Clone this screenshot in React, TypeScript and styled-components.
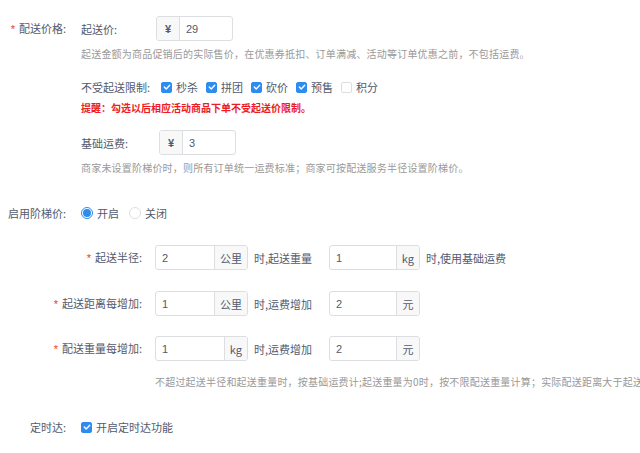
import React from "react";
import styled, { createGlobalStyle } from "styled-components";

const Global = createGlobalStyle`
  html, body { margin: 0; padding: 0; background: #fff; }
  body {
    font-family: "Noto Sans CJK SC", "Noto Sans", sans-serif;
    color: #515a6e;
    overflow: hidden;
    width: 640px;
    height: 453px;
  }
`;

const Page = styled.div`
  padding-top: 16px;
  width: 640px;
  box-sizing: border-box;
  white-space: nowrap;
  overflow: hidden;
`;

const FormItem = styled.div<{ $mt?: number }>`
  display: flex;
  align-items: flex-start;
  margin-top: ${(p) => p.$mt ?? 0}px;
`;

const Label = styled.div<{ $w: number; $h?: number }>`
  width: ${(p) => p.$w}px;
  flex: none;
  text-align: right;
  font-size: 11px;
  line-height: ${(p) => p.$h ?? 25}px;
  color: #515a6e;
`;

const Star = styled.span`
  color: #ed4014;
  font-size: 11px;
  margin-right: 4px;
  font-family: "Liberation Sans", sans-serif;
`;

const Content = styled.div<{ $ml: number }>`
  margin-left: ${(p) => p.$ml}px;
  display: flex;
  flex-direction: column;
`;

const InlineRow = styled.div<{ $mt?: number; $h?: number }>`
  display: flex;
  align-items: center;
  height: ${(p) => p.$h ?? 25}px;
  margin-top: ${(p) => p.$mt ?? 0}px;
`;

const SubLabel = styled.span<{ $w?: number }>`
  font-size: 11px;
  color: #515a6e;
  width: ${(p) => (p.$w ? `${p.$w}px` : "auto")};
  flex: none;
`;

const InputGroup = styled.div<{ $w: number }>`
  display: flex;
  width: ${(p) => p.$w}px;
  height: 25px;
  border: 1px solid #dcdee2;
  border-radius: 3px;
  box-sizing: border-box;
  overflow: hidden;
  flex: none;
  background: #fff;
`;

const Addon = styled.span<{ $side: "left" | "right" }>`
  flex: none;
  display: flex;
  align-items: center;
  justify-content: center;
  padding: 0 5px;
  min-width: 12px;
  background: #f8f8f9;
  color: #515a6e;
  font-size: 11px;
  ${(p) =>
    p.$side === "left"
      ? "border-right: 1px solid #dcdee2;"
      : "border-left: 1px solid #dcdee2;"}
`;

const Yen = styled.span`
  font-family: "Liberation Sans", sans-serif;
  font-weight: bold;
  font-size: 11px;
  color: #515a6e;
`;

const Field = styled.span`
  flex: 1;
  display: flex;
  align-items: center;
  padding-left: 6px;
  font-size: 11px;
  font-family: "Liberation Sans", sans-serif;
  color: #515a6e;
`;

const Help = styled.div<{ $mt?: number }>`
  font-size: 10px;
  line-height: 16px;
  color: #999;
  letter-spacing: 0.2px;
  margin-top: ${(p) => p.$mt ?? 5}px;
`;

const Warn = styled.div`
  font-size: 10px;
  line-height: 16px;
  color: #ed1c24;
  font-weight: bold;
  margin-top: 3px;
`;

const Option = styled.label<{ $mr?: number }>`
  display: inline-flex;
  align-items: center;
  font-size: 11px;
  color: #515a6e;
  margin-right: ${(p) => p.$mr ?? 8}px;
`;

const Box = styled.span<{ $on: boolean }>`
  width: 11px;
  height: 11px;
  box-sizing: border-box;
  border-radius: 2px;
  border: 1px solid ${(p) => (p.$on ? "#2d8cf0" : "#dcdee2")};
  background: ${(p) => (p.$on ? "#2d8cf0" : "#fff")};
  display: inline-flex;
  align-items: center;
  justify-content: center;
  margin-right: 4px;
  flex: none;
`;

const RadioRing = styled.span<{ $on: boolean }>`
  width: 12px;
  height: 12px;
  box-sizing: border-box;
  border-radius: 50%;
  border: 1px solid ${(p) => (p.$on ? "#2d8cf0" : "#dcdee2")};
  background: #fff;
  display: inline-flex;
  align-items: center;
  justify-content: center;
  margin-right: 4px;
  flex: none;
`;

const RadioDot = styled.span`
  width: 8px;
  height: 8px;
  border-radius: 50%;
  background: #2d8cf0;
`;

const Between = styled.span<{ $w?: number }>`
  font-size: 11px;
  color: #515a6e;
  margin-left: 6px;
  width: ${(p) => (p.$w ? `${p.$w}px` : "auto")};
  flex: none;
`;

const Check = ({ on, label, mr }: { on: boolean; label: string; mr?: number }) => (
  <Option $mr={mr}>
    <Box $on={on}>
      {on && (
        <svg width="8" height="8" viewBox="0 0 8 8">
          <path d="M1.3 4.1 L3.2 5.9 L6.7 2.2" fill="none" stroke="#fff" strokeWidth="1.4" strokeLinecap="round" strokeLinejoin="round" />
        </svg>
      )}
    </Box>
    {label}
  </Option>
);

const Radio = ({ on, label, mr }: { on: boolean; label: string; mr?: number }) => (
  <Option $mr={mr}>
    <RadioRing $on={on}>{on && <RadioDot />}</RadioRing>
    {label}
  </Option>
);

const Group = ({ value, unit, w }: { value: string; unit: string; w: number }) => (
  <InputGroup $w={w}>
    <Field>{value}</Field>
    <Addon $side="right">{unit}</Addon>
  </InputGroup>
);

const TierRow = ({
  mt,
  label,
  a,
  au,
  mid,
  b,
  bu,
  tail,
}: {
  mt: number;
  label: string;
  a: string;
  au: string;
  mid: string;
  b: string;
  bu: string;
  tail?: string;
}) => (
  <FormItem $mt={mt}>
    <Label $w={142}>
      <Star>*</Star>
      {label}
    </Label>
    <Content $ml={13}>
      <InlineRow>
        <Group value={a} unit={au} w={93} />
        <Between $w={75}>{mid}</Between>
        <Group value={b} unit={bu} w={91} />
        {tail && <Between>{tail}</Between>}
      </InlineRow>
    </Content>
  </FormItem>
);

export default function App() {
  return (
    <>
      <Global />
      <Page>
        <FormItem>
          <Label $w={66}>
            <Star>*</Star>配送价格:
          </Label>
          <Content $ml={15}>
            <InlineRow>
              <SubLabel $w={75}>起送价:</SubLabel>
              <InputGroup $w={77}>
                <Addon $side="left">
                  <Yen>¥</Yen>
                </Addon>
                <Field>29</Field>
              </InputGroup>
            </InlineRow>
            <Help>起送金额为商品促销后的实际售价，在优惠券抵扣、订单满减、活动等订单优惠之前，不包括运费。</Help>
            <InlineRow $mt={15} $h={20}>
              <SubLabel $w={80}>不受起送限制:</SubLabel>
              <Check on label="秒杀" mr={8} />
              <Check on label="拼团" mr={8} />
              <Check on label="砍价" mr={8} />
              <Check on label="预售" mr={8} />
              <Check on={false} label="积分" />
            </InlineRow>
            <Warn>提醒：勾选以后相应活动商品下单不受起送价限制。</Warn>
            <InlineRow $mt={14}>
              <SubLabel $w={78}>基础运费:</SubLabel>
              <InputGroup $w={77}>
                <Addon $side="left">
                  <Yen>¥</Yen>
                </Addon>
                <Field>3</Field>
              </InputGroup>
            </InlineRow>
            <Help>商家未设置阶梯价时，则所有订单统一运费标准；商家可按配送服务半径设置阶梯价。</Help>
          </Content>
        </FormItem>

        <FormItem $mt={27}>
          <Label $w={66} $h={20}>
            启用阶梯价:
          </Label>
          <Content $ml={15}>
            <InlineRow $h={20}>
              <Radio on label="开启" mr={10} />
              <Radio on={false} label="关闭" />
            </InlineRow>
          </Content>
        </FormItem>

        <TierRow mt={22} label="起送半径:" a="2" au="公里" mid="时,起送重量" b="1" bu="kg" tail="时,使用基础运费" />
        <TierRow mt={20} label="起送距离每增加:" a="1" au="公里" mid="时,运费增加" b="2" bu="元" />
        <TierRow mt={19} label="配送重量每增加:" a="1" au="kg" mid="时,运费增加" b="2" bu="元" />

        <FormItem>
          <Content $ml={155}>
            <Help $mt={12}>
              不超过起送半径和起送重量时，按基础运费计;起送重量为0时，按不限配送重量计算；实际配送距离大于起送半径时，不予配送。
            </Help>
          </Content>
        </FormItem>

        <FormItem $mt={27}>
          <Label $w={66} $h={20}>
            定时达:
          </Label>
          <Content $ml={15}>
            <InlineRow $h={20}>
              <Check on label="开启定时达功能" />
            </InlineRow>
          </Content>
        </FormItem>
      </Page>
    </>
  );
}
